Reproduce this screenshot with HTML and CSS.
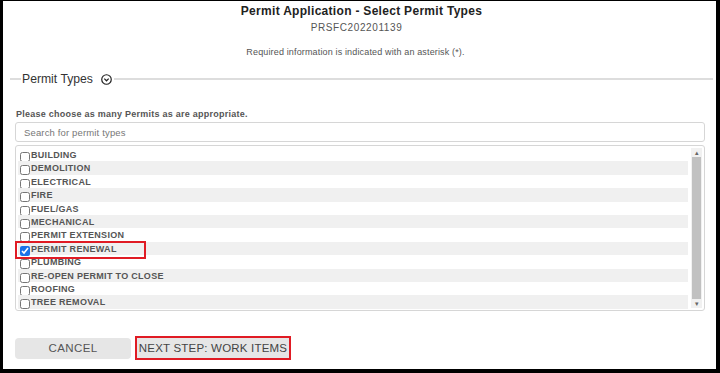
FILE: index.html
```html
<!DOCTYPE html>
<html lang="en">
<head>
    <meta charset="UTF-8">
    <meta name="viewport" content="width=device-width, initial-scale=1.0">
    <title>Permit Application - Select Permit Types</title>
    <link rel="stylesheet" href="styles.css">
</head>
<body>
<div class="frame">
    <div class="header">
        <h1>Permit Application - Select Permit Types</h1>
        <p class="record">PRSFC202201139</p>
        <p class="required">Required information is indicated with an asterisk (*).</p>
    </div>

    <div class="legend">
        <span class="line short"></span>
        <span class="legend-text">Permit Types</span>
        <svg class="toggle" width="11" height="11" viewBox="0 0 12 12">
            <circle cx="6" cy="6" r="5.2" fill="none" stroke="#222" stroke-width="1.3"/>
            <path d="M3.6 5 L6 7.4 L8.4 5" fill="none" stroke="#222" stroke-width="1.3"/>
        </svg>
        <span class="line"></span>
    </div>

    <div class="section">
        <p class="hint">Please choose as many Permits as are appropriate.</p>
        <input class="search" type="text" placeholder="Search for permit types">

        <div class="listbox">
            <ul class="items">
                <li><input type="checkbox">BUILDING</li>
                <li><input type="checkbox">DEMOLITION</li>
                <li><input type="checkbox">ELECTRICAL</li>
                <li><input type="checkbox">FIRE</li>
                <li><input type="checkbox">FUEL/GAS</li>
                <li><input type="checkbox">MECHANICAL</li>
                <li><input type="checkbox">PERMIT EXTENSION</li>
                <li class="marked"><input type="checkbox" checked>PERMIT RENEWAL</li>
                <li><input type="checkbox">PLUMBING</li>
                <li><input type="checkbox">RE-OPEN PERMIT TO CLOSE</li>
                <li><input type="checkbox">ROOFING</li>
                <li><input type="checkbox">TREE REMOVAL</li>
            </ul>
            <div class="scrollbar">
                <span class="arrow">&#9652;</span>
                <span class="thumb"></span>
                <span class="arrow">&#9662;</span>
            </div>
        </div>
    </div>

    <div class="botones">
        <button class="cancel">CANCEL</button>
        <button class="next">NEXT STEP: WORK ITEMS</button>
    </div>
</div>
</body>
</html>
```

FILE: styles.css
```css
body {
    margin: 0;
    font-family: "Liberation Sans", Arial, sans-serif;
    color: #333;
    background: #000;
}
.frame {
    width: 720px;
    height: 373px;
    box-sizing: border-box;
    border-style: solid;
    border-color: #000;
    border-width: 1px 4px 4px 3px;
    background: #fff;
    display: flex;
    flex-direction: column;
}
.header {
    text-align: center;
    padding-left: 4px;
}
h1 {
    margin: 3px 0 0;
    font-size: 12px;
    line-height: 15px;
    letter-spacing: 0.3px;
    color: #222;
}
.record {
    margin: 3px 0 0;
    padding-right: 10px;
    font-size: 10px;
    line-height: 12px;
    letter-spacing: 0.6px;
    color: #555;
}
.required {
    margin: 12px 0 0;
    padding-right: 12px;
    font-size: 9px;
    line-height: 12px;
    letter-spacing: 0.15px;
    color: #555;
}
.legend {
    display: flex;
    align-items: center;
    margin-top: 12px;
    padding-left: 7px;
    padding-right: 3px;
    height: 18px;
}
.line {
    flex: 1;
    height: 2px;
    background: #ddd;
}
.line.short {
    flex: none;
    width: 11px;
}
.legend-text {
    margin-left: 1px;
    font-size: 12.2px;
    color: #333;
}
.toggle {
    margin: 1px 2px 0 8px;
}
.section {
    padding: 0 11px 0 12px;
}
.hint {
    margin: 20px 0 0 1px;
    font-size: 9px;
    line-height: 12px;
    font-weight: bold;
    letter-spacing: 0.25px;
    color: #555;
}
.search {
    display: block;
    width: 100%;
    box-sizing: border-box;
    height: 20px;
    margin-top: 2px;
    padding: 0 8px;
    border: 1px solid #d6d6d6;
    border-radius: 3px;
    font-family: inherit;
    font-size: 9.5px;
    letter-spacing: 0.15px;
    color: #333;
}
.search::placeholder {
    color: #777;
}
.listbox {
    display: flex;
    height: 166px;
    box-sizing: border-box;
    margin-top: 3px;
    border: 1px solid #d6d6d6;
    border-radius: 3px;
    padding: 2px;
}
.items {
    flex: 1;
    list-style: none;
    margin: 0;
    padding: 0 3px 0 0;
}
.items li {
    position: relative;
    height: 13.4px;
    line-height: 15px;
    white-space: nowrap;
    font-size: 9px;
    font-weight: bold;
    letter-spacing: 0.3px;
    color: #555;
}
.items li:nth-child(even) {
    background: #f0f0f0;
}
.items input {
    width: 10px;
    height: 10px;
    margin: 0 1px 0 2px;
    vertical-align: -4px;
    accent-color: #1a73e8;
}
.items li.marked::after {
    content: "";
    position: absolute;
    left: -3px;
    top: -1px;
    width: 127px;
    height: 14px;
    border: 2px solid #e01b24;
}
.scrollbar {
    width: 11px;
    display: flex;
    flex-direction: column;
    align-items: center;
    background: #f1f1f1;
}
.arrow {
    font-size: 7px;
    line-height: 9px;
    color: #666;
}
.thumb {
    flex: 1;
    width: 9px;
    background: #c1c1c1;
}
.botones {
    display: flex;
    align-items: center;
    gap: 4px;
    margin-top: auto;
    margin-bottom: 9px;
    padding-left: 12px;
}
button {
    font-family: inherit;
    font-size: 11.5px;
    letter-spacing: 0.4px;
    white-space: nowrap;
    color: #555;
    background: #e6e6e6;
    border: none;
    border-radius: 4px;
    padding: 0;
    cursor: pointer;
}
.cancel {
    width: 116px;
    height: 21px;
}
.next {
    width: 156px;
    height: 24px;
    border: 2px solid #e01b24;
    border-radius: 0;
    letter-spacing: 0.2px;
    color: #444;
}
```
